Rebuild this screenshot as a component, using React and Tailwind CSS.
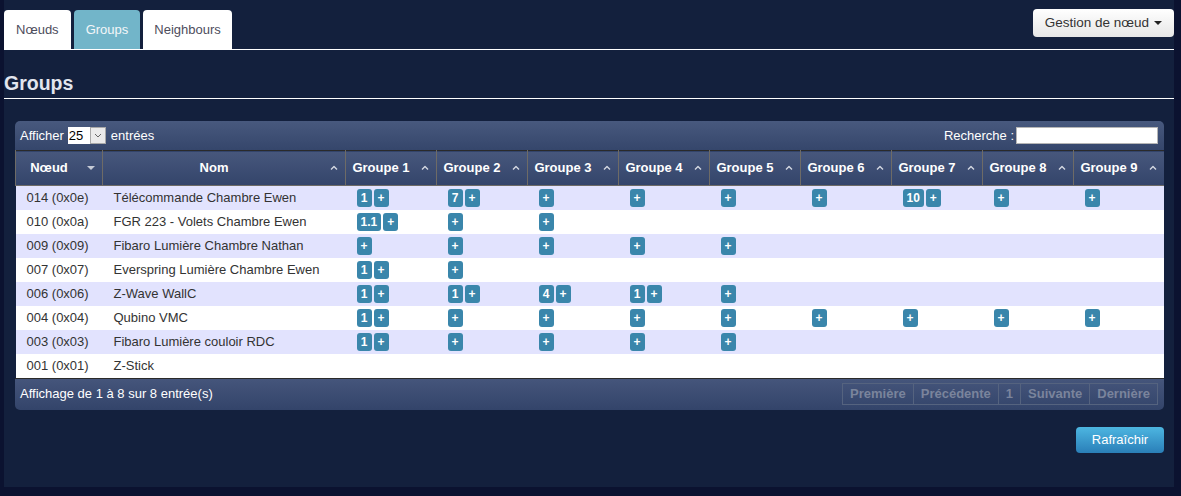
import React from "react";

const rows = [
  { id: "014 (0x0e)", name: "Télécommande Chambre Ewen", g: [["1"], ["7"], [], [], [], [], ["10"], [], []] },
  { id: "010 (0x0a)", name: "FGR 223 - Volets Chambre Ewen", g: [["1.1"], [], []] },
  { id: "009 (0x09)", name: "Fibaro Lumière Chambre Nathan", g: [[], [], [], [], []] },
  { id: "007 (0x07)", name: "Everspring Lumière Chambre Ewen", g: [["1"], []] },
  { id: "006 (0x06)", name: "Z-Wave WallC", g: [["1"], ["1"], ["4"], ["1"], []] },
  { id: "004 (0x04)", name: "Qubino VMC", g: [["1"], [], [], [], [], [], [], [], []] },
  { id: "003 (0x03)", name: "Fibaro Lumière couloir RDC", g: [["1"], [], [], [], []] },
  { id: "001 (0x01)", name: "Z-Stick", g: [] },
];

const groups = [1, 2, 3, 4, 5, 6, 7, 8, 9];

const Badge = ({ children }) => (
  <span className="inline-flex h-[18px] min-w-[15px] items-center justify-center rounded-[3px] bg-[#3a86ab] px-[4px] text-[12px] font-bold leading-none text-white">
    {children}
  </span>
);

const Caret = () => (
  <svg width="8" height="5" viewBox="0 0 8 5" className="absolute right-[7px] top-1/2 -translate-y-1/2">
    <path d="M1 4 L4 1 L7 4" fill="none" stroke="#d4d8e2" strokeWidth="1.4" />
  </svg>
);

const Down = () => (
  <svg width="8" height="4" viewBox="0 0 8 4" className="absolute right-[7px] top-1/2 -translate-y-1/2">
    <path d="M0 0 L8 0 L4 4 Z" fill="#c6cbd6" />
  </svg>
);

export default function App() {
  return (
    <div className="h-[496px] w-[1181px] overflow-hidden bg-[#0b1230] font-['Liberation_Sans',Arial,sans-serif]">
      <div className="ml-[4px] h-[487px] w-[1170px] bg-[#13203d]">
        {/* tabs */}
        <div className="flex items-end justify-between border-b border-white pt-[9px]">
          <div className="flex gap-[3px]">
            <div className="flex h-[39px] items-center rounded-t-[4px] bg-white px-[12px] text-[13px] text-[#4d4d5c]">Nœuds</div>
            <div className="flex h-[39px] items-center rounded-t-[4px] bg-[#72b5c9] px-[12px] text-[13px] text-[#f4f7f9]">Groups</div>
            <div className="flex h-[39px] items-center rounded-t-[4px] bg-white px-[11px] text-[13px] text-[#4d4d5c]">Neighbours</div>
          </div>
          <button className="mb-[12px] flex h-[28px] items-center gap-[5px] self-start rounded-[4px] bg-gradient-to-b from-white to-[#e6e6e6] px-[12px] text-[13.5px] text-[#333]">
            Gestion de nœud
            <svg width="8" height="4" viewBox="0 0 8 4"><path d="M0 0 L8 0 L4 4 Z" fill="#222" /></svg>
          </button>
        </div>

        <div className="mt-[20px] border-b border-white pb-[4px]">
          <h1 className="h-[24px] text-[19.5px] font-bold leading-[26px] text-[#e2e5ee]">Groups</h1>
        </div>

        {/* panel */}
        <div className="ml-[11px] mt-[22px] w-[1149px] overflow-hidden rounded-[5px]">
          <div className="flex h-[29px] items-center justify-between bg-gradient-to-b from-[#48597e] to-[#35466b] pl-[5px] pr-[6px] text-[13px] text-white">
            <div className="flex items-center">
              <span>Afficher</span>
              <div className="ml-[4px] flex h-[17px] w-[38px] items-stretch bg-white">
                <span className="flex w-[22px] items-center pl-[1px] text-[13px] text-black">25</span>
                <span className="flex flex-1 items-center justify-center border border-[#a8a8a8] bg-[#eaeaea]">
                  <svg width="8" height="5" viewBox="0 0 8 5"><path d="M1 1 L4 4 L7 1" fill="none" stroke="#666" strokeWidth="1" /></svg>
                </span>
              </div>
              <span className="ml-[5px]">entrées</span>
            </div>
            <div className="flex items-center">
              <span>Recherche :</span>
              <div className="ml-[2px] h-[17px] w-[142px] border border-[#b5b5b5] bg-white" />
            </div>
          </div>

          <table className="w-[1149px] table-fixed border-collapse text-[13px]">
            <colgroup>
              <col className="w-[87px]" />
              <col className="w-[243px]" />
              {groups.map((g) => (
                <col key={g} className="w-[91px]" />
              ))}
            </colgroup>
            <thead>
              <tr className="h-[35px] border-t border-[#2a2a2a] bg-gradient-to-b from-[#47577c] to-[#33446a] text-white">
                <th className="relative border-x border-b border-[#6e6b66] pr-[20px] text-center font-bold">
                  Nœud
                  <Down />
                </th>
                <th className="relative border-x border-b border-[#6e6b66] pr-[20px] text-center font-bold">
                  Nom
                  <Caret />
                </th>
                {groups.map((g) => (
                  <th key={g} className="relative border-x border-b border-[#6e6b66] pr-[20px] text-center font-bold">
                    Groupe {g}
                    <Caret />
                  </th>
                ))}
              </tr>
            </thead>
            <tbody>
              {rows.map((r, i) => (
                <tr key={r.id} className={`h-[24px] text-[#333] ${i % 2 === 0 ? "bg-[#e2e3fe]" : "bg-white"}`}>
                  <td className="pl-[11px]">{r.id}</td>
                  <td className="truncate pl-[11px]">{r.name}</td>
                  {groups.map((g, j) => (
                    <td key={g} className="pl-[11px]">
                      {r.g[j] && (
                        <div className="flex gap-[2px]">
                          {r.g[j].map((v) => (
                            <Badge key={v}>{v}</Badge>
                          ))}
                          <Badge>+</Badge>
                        </div>
                      )}
                    </td>
                  ))}
                </tr>
              ))}
            </tbody>
          </table>

          <div className="flex h-[32px] items-center justify-between border-t border-[#2a2a2a] bg-gradient-to-b from-[#45557b] to-[#33446a] pl-[5px] pr-[6px] text-[13px] text-white">
            <span>Affichage de 1 à 8 sur 8 entrée(s)</span>
            <div className="flex text-[13px] font-bold text-[#7a849c]">
              {["Première", "Précédente", "1", "Suivante", "Dernière"].map((p, i) => (
                <span key={p} className={`flex h-[22px] items-center border border-[#55637f] px-[7px] ${i > 0 ? "-ml-px" : ""}`}>
                  {p}
                </span>
              ))}
            </div>
          </div>
        </div>

        <div className="mt-[17px] flex w-[1160px] justify-end">
          <button className="h-[26px] w-[88px] rounded-[4px] bg-gradient-to-b from-[#4db6e1] to-[#2a7fb8] text-[13px] text-white">
            Rafraîchir
          </button>
        </div>
      </div>
    </div>
  );
}
